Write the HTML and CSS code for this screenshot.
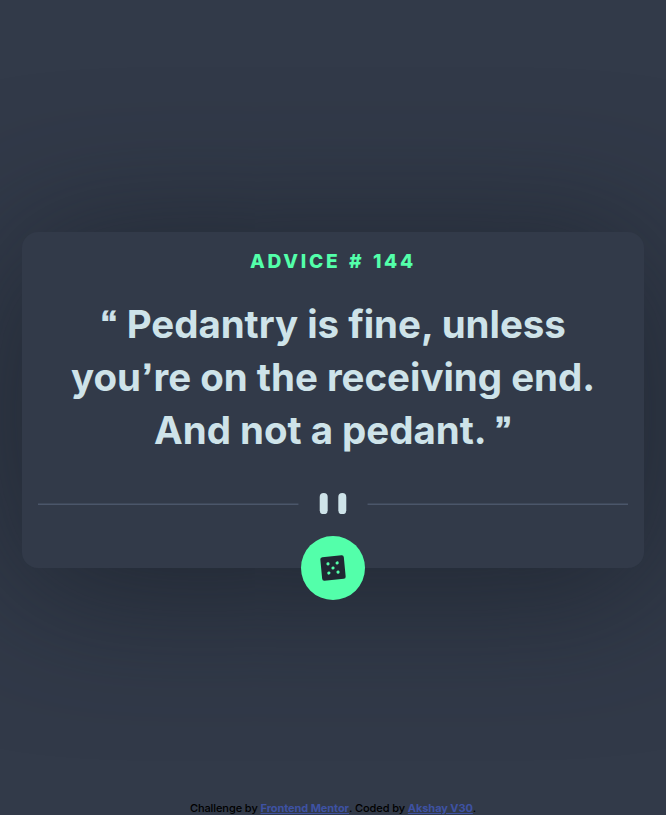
FILE: index.html
```html
<!DOCTYPE html>
<html lang="en">
<head>
<meta charset="utf-8">
<title>Advice generator</title>
<link rel="stylesheet" href="styles.css">
</head>
<body>
<main class="card">
  <h1 class="card-title">Advice # 144</h1>
  <p class="quote">
    <span class="line"><span class="mark">“</span> Pedantry is fine, unless</span>
    <span class="line">you<span class="mark apostrophe">’</span>re on the receiving end.</span>
    <span class="line">And not a pedant. <span class="mark">”</span></span>
  </p>
  <svg class="divider" viewBox="0 0 444 16" aria-hidden="true">
    <path fill="#4b566a" d="M0 7.8h196v1.3H0zM248 7.8h196v1.3H248z"/>
    <g fill="#cee3e9"><rect x="212" width="6" height="16" rx="3"/><rect x="226" width="6" height="16" rx="3"/></g>
  </svg>
  <button class="dice" type="button" aria-label="New advice">
    <svg class="dice-icon" viewBox="-16 -16 32 32" aria-hidden="true">
      <g transform="rotate(-5.5)">
        <rect x="-11.8" y="-11.8" width="23.6" height="23.6" rx="2.2" fill="#202733"/>
        <g fill="#53ffaa"><circle cx="-4.6" cy="-4.6" r="1.6"/><circle cx="4.6" cy="-4.6" r="1.6"/><circle r="1.6"/><circle cx="-4.6" cy="4.6" r="1.6"/><circle cx="4.6" cy="4.6" r="1.6"/></g>
      </g>
    </svg>
  </button>
</main>
<footer class="attribution">Challenge by <a href="#">Frontend Mentor</a>. Coded by <a href="#">Akshay V30</a>.</footer>
</body>
</html>
```
FILE: styles.css
```css
* { box-sizing: border-box; }
body {
  margin: 0;
  height: 815px;
  overflow: hidden;
  display: grid;
  grid-template-rows: 232px 336px 1fr;
  background: #323a49;
  font-family: Inter, sans-serif;
}
.card {
  grid-row: 2;
  position: relative;
  margin: 0 22px;
  padding: 16px;
  border-radius: 16px;
  background: #323a49;
  box-shadow: 0 14px 150px rgba(24, 30, 40, .76);
  text-align: center;
}
.card-title {
  margin: 0;
  color: #53ffaa;
  font-size: 19.2px;
  line-height: 27px;
  font-weight: 800;
  letter-spacing: 2.7px;
  word-spacing: 1.8px;
  text-transform: uppercase;
}
.quote {
  margin: 23px 0 0;
  color: #cee3e9;
  font-size: 38.5px;
  line-height: 53px;
  font-weight: 700;
  letter-spacing: -.04px;
  white-space: nowrap;
}
.line { display: block; height: 53px; }
.mark {
  font-family: "Liberation Sans", sans-serif;
  font-size: 35px;
  line-height: 1;
  vertical-align: 3px;
  -webkit-text-stroke: .8px #cee3e9;
}
.apostrophe { margin: 0 1.5px; }
.divider {
  display: block;
  width: 590px;
  height: 21.3px;
  margin-top: 36px;
}
.dice {
  position: absolute;
  left: 50%;
  bottom: -32px;
  width: 64px;
  height: 64px;
  margin-left: -32px;
  padding: 16px;
  border: 0;
  border-radius: 50%;
  background: #53ffaa;
}
.dice-icon { display: block; width: 32px; height: 32px; }
.attribution {
  grid-row: 3;
  align-self: end;
  height: 14px;
  color: #000;
  text-align: center;
  font-size: 11px;
  line-height: 14px;
  font-weight: 500;
  letter-spacing: -.08px;
}
.attribution a { color: #3e52a3; font-weight: 700; }
```
